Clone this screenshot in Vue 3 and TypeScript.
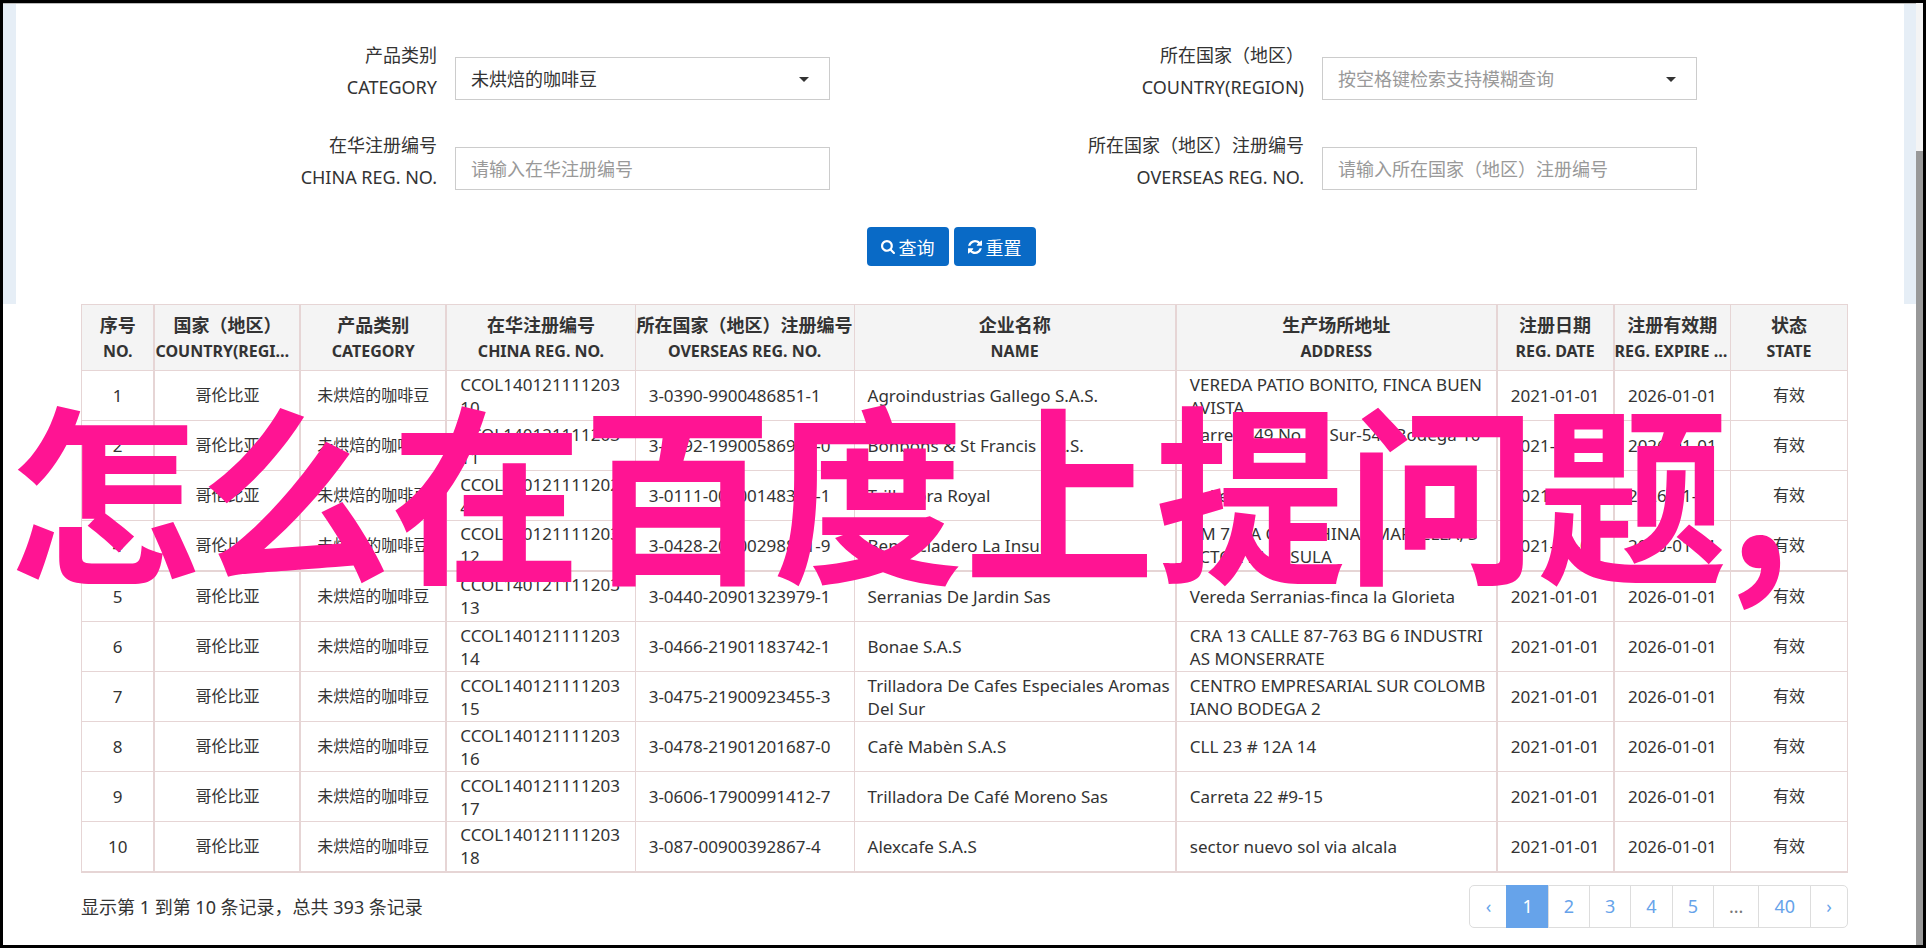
<script setup lang="ts">
import { ref } from 'vue'

interface Column {
  key: string
  zh: string
  en: string
  width: number
}

interface Company {
  china: string
  overseas: string
  name: string
  address: string
}

const columns: Column[] = [
  { key: 'no', zh: '序号', en: 'NO.', width: 73 },
  { key: 'country', zh: '国家（地区）', en: 'COUNTRY(REGION)', width: 146 },
  { key: 'category', zh: '产品类别', en: 'CATEGORY', width: 146 },
  { key: 'china', zh: '在华注册编号', en: 'CHINA REG. NO.', width: 189 },
  { key: 'overseas', zh: '所在国家（地区）注册编号', en: 'OVERSEAS REG. NO.', width: 219 },
  { key: 'name', zh: '企业名称', en: 'NAME', width: 322 },
  { key: 'address', zh: '生产场所地址', en: 'ADDRESS', width: 321 },
  { key: 'date', zh: '注册日期', en: 'REG. DATE', width: 117 },
  { key: 'expire', zh: '注册有效期', en: 'REG. EXPIRE DATE', width: 117 },
  { key: 'state', zh: '状态', en: 'STATE', width: 117 },
]

const totalWidth = columns.reduce((sum, c) => sum + c.width, 0)

const companies: Company[] = [
  { china: 'CCOL14012111120310', overseas: '3-0390-9900486851-1', name: 'Agroindustrias Gallego S.A.S.', address: 'VEREDA PATIO BONITO, FINCA BUENAVISTA' },
  { china: 'CCOL14012111120311', overseas: '3-0392-19900586942-0', name: 'Bonbons & St Francis S.A.S.', address: 'Carrera 49 No 61 Sur-540 Bodega 10\n8' },
  { china: 'CCOL1401211112024', overseas: '3-0111-00900148314-1', name: 'Trilladora Royal', address: 'Calle 10' },
  { china: 'CCOL14012111120312', overseas: '3-0428-20900298811-9', name: 'Beneficiadero La Insula', address: 'KM 7 VIA CHINCHINA - MARSELLA, S\nECTOR LA INSULA' },
  { china: 'CCOL14012111120313', overseas: '3-0440-20901323979-1', name: 'Serranias De Jardin Sas', address: 'Vereda Serranias-finca la Glorieta' },
  { china: 'CCOL14012111120314', overseas: '3-0466-21901183742-1', name: 'Bonae S.A.S', address: 'CRA 13 CALLE 87-763 BG 6 INDUSTRIAS MONSERRATE' },
  { china: 'CCOL14012111120315', overseas: '3-0475-21900923455-3', name: 'Trilladora De Cafes Especiales Aromas Del Sur', address: 'CENTRO EMPRESARIAL SUR COLOMBIANO BODEGA 2' },
  { china: 'CCOL14012111120316', overseas: '3-0478-21901201687-0', name: 'Cafè Mabèn S.A.S', address: 'CLL 23 # 12A 14' },
  { china: 'CCOL14012111120317', overseas: '3-0606-17900991412-7', name: 'Trilladora De Café Moreno Sas', address: 'Carreta 22 #9-15' },
  { china: 'CCOL14012111120318', overseas: '3-087-00900392867-4', name: 'Alexcafe S.A.S', address: 'sector nuevo sol via alcala' },
]

const pages = ['‹', '1', '2', '3', '4', '5', '...', '40', '›']
const current = ref('1')
const category = ref('coffee')
const country = ref('')
const chinaNo = ref('')
const overseasNo = ref('')

function reset() {
  country.value = ''
  chinaNo.value = ''
  overseasNo.value = ''
}

function go(page: string) {
  if (/^\d+$/.test(page)) current.value = page
}
</script>

<template>
  <div class="window">
    <div class="panel">
      <form class="search" @submit.prevent>
        <div class="fields">
          <div class="field">
            <label for="category"><span>产品类别</span><span>CATEGORY</span></label>
            <div class="control">
              <select id="category" v-model="category">
                <option value="coffee">未烘焙的咖啡豆</option>
              </select>
              <svg class="caret" viewBox="0 0 10 5" aria-hidden="true"><path d="M0 0h10L5 5z" /></svg>
            </div>
          </div>
          <div class="field">
            <label for="country"><span>所在国家（地区）</span><span>COUNTRY(REGION)</span></label>
            <div class="control">
              <select id="country" v-model="country" class="empty">
                <option value="">按空格键检索支持模糊查询</option>
              </select>
              <svg class="caret" viewBox="0 0 10 5" aria-hidden="true"><path d="M0 0h10L5 5z" /></svg>
            </div>
          </div>
          <div class="field">
            <label for="china-no"><span>在华注册编号</span><span>CHINA REG. NO.</span></label>
            <div class="control">
              <input id="china-no" v-model="chinaNo" type="text" placeholder="请输入在华注册编号" />
            </div>
          </div>
          <div class="field">
            <label for="overseas-no"><span>所在国家（地区）注册编号</span><span>OVERSEAS REG. NO.</span></label>
            <div class="control">
              <input id="overseas-no" v-model="overseasNo" type="text" placeholder="请输入所在国家（地区）注册编号" />
            </div>
          </div>
        </div>
        <div class="actions">
          <button type="submit">
            <svg viewBox="0 0 1664 1664" aria-hidden="true">
              <path d="M1152 704q0-185-131.500-316.500T704 256 387.500 387.500 256 704t131.500 316.500T704 1152t316.500-131.500T1152 704zm512 832q0 52-38 90t-90 38q-54 0-90-38l-343-342q-179 124-399 124-143 0-273.500-55.500t-225-150-150-225T0 704t55.500-273.500 150-225 225-150T704 0t273.500 55.500 225 150 150 225T1408 704q0 220-124 399l343 343q37 37 37 90z" />
            </svg>
            <span>查询</span>
          </button>
          <button type="button" @click="reset">
            <svg viewBox="0 0 1536 1536" aria-hidden="true">
              <path d="M1511 928q0 5-1 7-64 268-268 434.500T764 1536q-146 0-282.500-55T238 1324l-129 129q-19 19-45 19t-45-19-19-45V960q0-26 19-45t45-19h448q26 0 45 19t19 45-19 45l-137 137q71 66 161 102t187 36q134 0 250-65t186-179q11-17 53-117 8-23 30-23h192q13 0 22.500 9.500t9.500 22.500zm25-800v448q0 26-19 45t-45 19h-448q-26 0-45-19t-19-45 19-45l138-138Q969 256 768 256q-134 0-250 65T332 500q-11 17-53 117-8 23-30 23H50q-13 0-22.500-9.500T18 608v-7q65-268 270-434.500T768 0q146 0 284 55.500T1297 212l130-129q19-19 45-19t45 19 19 45z" />
            </svg>
            <span>重置</span>
          </button>
        </div>
      </form>
    </div>

    <main class="results">
      <table>
        <colgroup>
          <col v-for="c in columns" :key="c.key" :style="{ width: (c.width / totalWidth) * 100 + '%' }" />
        </colgroup>
        <thead>
          <tr>
            <th v-for="c in columns" :key="c.key" scope="col">
              <div class="zh">{{ c.zh }}</div>
              <div class="th-en">{{ c.en }}</div>
            </th>
          </tr>
        </thead>
        <tbody>
          <tr v-for="(row, i) in companies" :key="row.china">
            <td class="mid">{{ i + 1 }}</td>
            <td class="mid cjk">哥伦比亚</td>
            <td class="mid cjk">未烘焙的咖啡豆</td>
            <td class="code">{{ row.china }}</td>
            <td class="id">{{ row.overseas }}</td>
            <td>{{ row.name }}</td>
            <td class="address">{{ row.address }}</td>
            <td class="mid">2021-01-01</td>
            <td class="mid">2026-01-01</td>
            <td class="mid cjk">有效</td>
          </tr>
        </tbody>
      </table>

      <div class="footer">
        <p>显示第 1 到第 10 条记录，总共 393 条记录</p>
        <nav aria-label="分页">
          <button
            v-for="p in pages"
            :key="p"
            type="button"
            :class="{ active: p === current, arrow: p === '‹' || p === '›', gap: p === '...' }"
            @click="go(p)"
          >{{ p }}</button>
        </nav>
      </div>
    </main>

    <div class="scrollbar"><div class="thumb"></div></div>
    <div class="caption">怎么在百度上提问题,</div>
  </div>
</template>

<style>
body {
  margin: 0;
  background: #fff;
}
</style>

<style scoped>
.window {
  position: relative;
  box-sizing: border-box;
  min-height: calc(100vh - 2px);
  margin-right: 1px;
  overflow: hidden;
  border: 3px solid #000;
  background: #fff;
  color: #333;
  font-family: "Noto Sans", "Noto Sans CJK SC", sans-serif;
}
.panel {
  margin-right: 7px;
  padding: 0 12px 0 13px;
  border-top: 1px solid #bbb;
  background: #e6eef6;
}
.search {
  padding: 35px 77px 38px;
  background: #fff;
}
.fields {
  display: grid;
  grid-template-columns: 1fr 1fr;
  row-gap: 26px;
}
.field {
  display: flex;
  justify-content: flex-end;
  align-items: flex-start;
  gap: 18px;
  padding-right: 130px;
}
.field label {
  display: flex;
  flex-direction: column;
  text-align: right;
  font-size: 18px;
  line-height: 32px;
  white-space: nowrap;
}
.control {
  position: relative;
  width: 375px;
  margin-top: 18px;
}
.control select,
.control input {
  box-sizing: border-box;
  display: block;
  width: 100%;
  height: 43px;
  padding: 0 15px;
  border: 1px solid #ccc;
  border-radius: 0;
  outline: none;
  appearance: none;
  background: #fff;
  color: #333;
  font-family: inherit;
  font-size: 18px;
}
.control select.empty,
.control input::placeholder {
  color: #999;
}
.caret {
  position: absolute;
  top: 20px;
  right: 21px;
  width: 10px;
  height: 5px;
  fill: #333;
  pointer-events: none;
}
.actions {
  display: flex;
  justify-content: center;
  gap: 5px;
  margin-top: 34px;
  padding-right: 18px;
}
.actions button {
  display: flex;
  align-items: center;
  gap: 4px;
  height: 39px;
  padding: 0 14px;
  border: 0;
  border-radius: 4px;
  background: #096ac6;
  color: #fff;
  font-family: inherit;
  font-size: 18px;
}
.actions svg {
  width: 14px;
  height: 14px;
  fill: #fff;
}
.results {
  margin: 0 75px 0 78px;
}
table {
  width: 100%;
  table-layout: fixed;
  border-collapse: collapse;
  border-bottom: 2px solid #e6d5d5;
}
th {
  height: 65px;
  padding: 0;
  border: 1px solid #e6d5d5;
  background: #f4f4f4;
  white-space: nowrap;
}
.zh {
  font-size: 18px;
  line-height: 26px;
}
.th-en {
  overflow: hidden;
  text-overflow: ellipsis;
  font-size: 16px;
  line-height: 26px;
}
td {
  box-sizing: border-box;
  height: 50px;
  padding: 0 4px 0 13px;
  border: 1px solid #e6d5d5;
  font-size: 17px;
  line-height: 23px;
  vertical-align: middle;
}
.mid {
  padding: 0;
  text-align: center;
}
.cjk {
  font-size: 16px;
}
.code {
  padding-right: 13px;
  word-break: break-all;
}
.address {
  padding-right: 8px;
  white-space: pre-line;
  word-break: break-all;
}
.id {
  white-space: nowrap;
}
th:nth-child(2),
th:nth-child(3),
th:nth-child(4),
th:nth-child(7),
th:nth-child(8),
th:nth-child(9),
td:nth-child(2),
td:nth-child(3),
td:nth-child(4),
td:nth-child(7),
td:nth-child(8),
td:nth-child(9) {
  border-left-width: 2px;
}
tbody tr:nth-child(4) td {
  border-bottom-width: 2px;
}
tbody tr:nth-child(5) td {
  height: 51px;
}
.footer {
  display: flex;
  justify-content: space-between;
  align-items: center;
  margin-top: 12px;
}
.footer p {
  margin: 0;
  font-size: 18px;
}
nav {
  display: flex;
}
nav button {
  box-sizing: border-box;
  min-width: 42px;
  height: 43px;
  margin-left: -1px;
  padding: 0 15px;
  border: 1px solid #ddd;
  background: #fff;
  color: #66a3ea;
  font-family: inherit;
  font-size: 18px;
}
nav .arrow {
  min-width: 38px;
  padding: 0 12px;
}
nav .gap {
  color: #777;
}
nav .active {
  border-color: #66a3ea;
  background: #66a3ea;
  color: #fff;
}
nav button:first-child {
  border-radius: 5px 0 0 5px;
}
nav button:last-child {
  border-radius: 0 5px 5px 0;
}
.scrollbar {
  position: absolute;
  top: 0;
  right: 0;
  bottom: 0;
  width: 7px;
  background: #f4f4f4;
}
.thumb {
  height: 100%;
  margin-top: 148px;
  background: #999;
}
.caption {
  position: absolute;
  top: 344px;
  left: 6px;
  color: #ff1493;
  font-family: "Noto Sans CJK SC", sans-serif;
  font-size: 191px;
  font-weight: 700;
  line-height: 278px;
  white-space: nowrap;
  pointer-events: none;
}
</style>
